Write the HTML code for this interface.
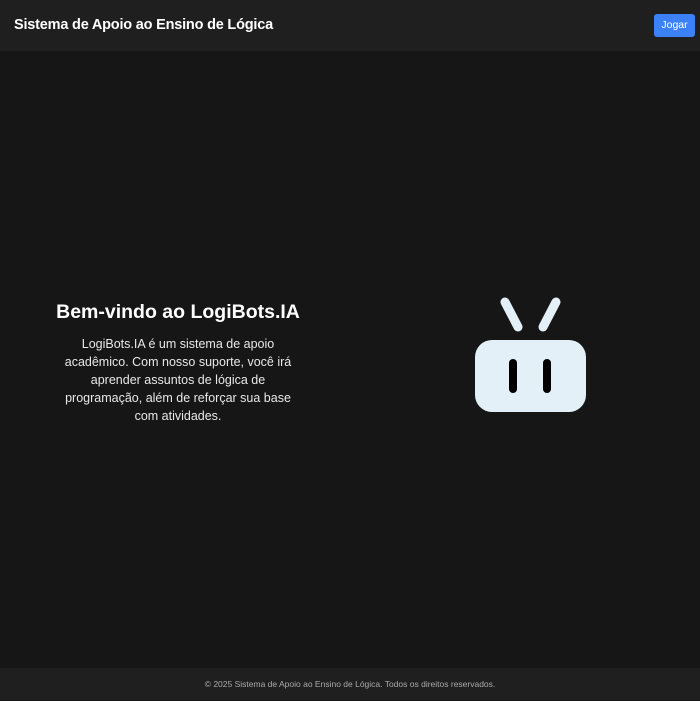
<!DOCTYPE html>
<html><head><meta charset="utf-8"><style>
*{margin:0;padding:0;box-sizing:border-box}
body{width:700px;height:700px;background:#161616;font-family:"Liberation Sans",sans-serif;color:#fff;position:relative;overflow:hidden}
header{position:absolute;top:0;left:0;width:700px;height:51px;background:#1f1f1f}
header h1{position:absolute;left:14px;top:17px;font-size:14.5px;font-weight:bold;letter-spacing:-0.2px}
.btn{position:absolute;left:654px;top:14px;width:41px;height:23px;background:#3b82f6;border-radius:3px;font-size:10.5px;line-height:23px;text-align:center;color:#fff}
h2{position:absolute;left:38px;width:280px;top:301px;text-align:center;font-size:19.5px;font-weight:bold}
p{position:absolute;left:63px;width:230px;top:335px;text-align:center;font-size:12.5px;line-height:18px;color:#e8e8e8}
footer{position:absolute;left:0;top:668px;width:700px;height:32px;background:#1f1f1f;text-align:center;font-size:8.5px;line-height:33px;color:#aaa}
</style></head><body>
<header><h1>Sistema de Apoio ao Ensino de Lógica</h1><div class="btn">Jogar</div></header>
<h2>Bem-vindo ao LogiBots.IA</h2>
<p>LogiBots.IA é um sistema de apoio acadêmico. Com nosso suporte, você irá aprender assuntos de lógica de programação, além de reforçar sua base com atividades.</p>
<svg style="position:absolute;left:0;top:0" width="700" height="700">
<g stroke="#e3f0f7" stroke-width="9" stroke-linecap="round"><line x1="505" y1="302" x2="518" y2="327"/><line x1="556" y1="302" x2="543" y2="327"/></g>
<rect x="475" y="340" width="111" height="72" rx="17" fill="#e3f0f7"/>
<g stroke="#000" stroke-width="8" stroke-linecap="round"><line x1="513" y1="363" x2="513" y2="389"/><line x1="547" y1="363" x2="547" y2="389"/></g>
</svg>
<footer>© 2025 Sistema de Apoio ao Ensino de Lógica. Todos os direitos reservados.</footer>
</body></html>
